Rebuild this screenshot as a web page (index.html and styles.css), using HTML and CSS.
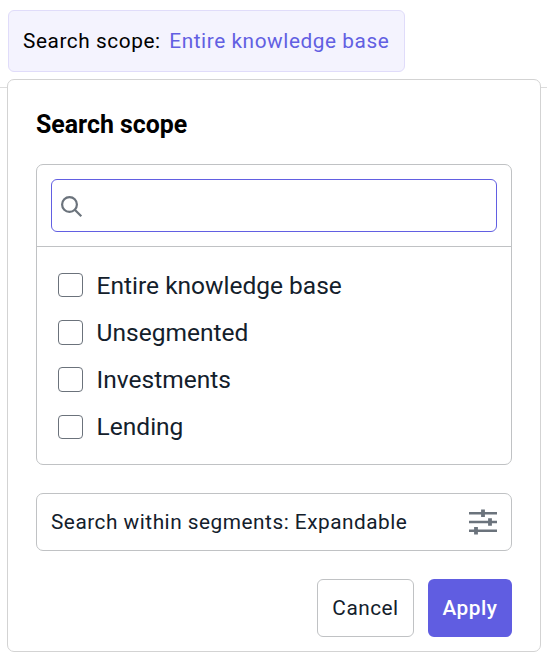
FILE: index.html
```html
<!DOCTYPE html>
<html lang="en">

<head>
    <meta charset="utf-8">
    <title>Search scope</title>
    <link rel="stylesheet" href="styles.css">
</head>

<body>
    <div class="toolbar">
        <button class="scope-button" type="button">
            <span>Search scope:</span>
            <span class="scope-value">Entire knowledge base</span>
        </button>
    </div>

    <div class="panel">
        <h2>Search scope</h2>

        <div class="segments">
            <div class="search">
                <label class="search-box">
                    <svg class="search-icon" viewBox="0 0 22 22">
                        <circle cx="8.5" cy="8.5" r="7.4" />
                        <path d="M13.8 13.8L20.3 20.3" />
                    </svg>
                    <input type="text" aria-label="Search">
                </label>
            </div>

            <div class="options">
                <label class="option"><input type="checkbox"><span>Entire knowledge base</span></label>
                <label class="option"><input type="checkbox"><span>Unsegmented</span></label>
                <label class="option"><input type="checkbox"><span>Investments</span></label>
                <label class="option"><input type="checkbox"><span>Lending</span></label>
            </div>
        </div>

        <div class="expand">
            <span>Search within segments: Expandable</span>
            <svg class="sliders-icon" viewBox="0 0 28 26">
                <path class="line" d="M0 4.2H28M0 13H28M0 21.8H28" />
                <path class="knob" d="M14 .4V8M21 9.2V16.8M7 18V25.6" />
            </svg>
        </div>

        <div class="actions">
            <button class="cancel" type="button">Cancel</button>
            <button class="apply" type="button">Apply</button>
        </div>
    </div>
</body>

</html>
```

FILE: styles.css
```css
* {
    box-sizing: border-box;
}

body {
    margin: 0;
    background-color: #ffffff;
    color: #13202b;
    font-family: Roboto, "Liberation Sans", sans-serif;
    overflow: hidden;
}

button {
    font-family: inherit;
    font-size: 20.8px;
    letter-spacing: 0.5px;
    border-radius: 6px;
    cursor: pointer;
}

/* Bar behind the dropdown */
.toolbar {
    height: 88px;
    padding: 10px 8px 0;
    border-bottom: 1px solid #dcdcdc;
}

.scope-button {
    display: flex;
    align-items: center;
    gap: 8.6px;
    width: 397px;
    height: 62px;
    padding: 0 14px;
    border: 1px solid #e0dcfa;
    background-color: #f4f3fe;
    color: #000000;
    letter-spacing: 0.57px;
    white-space: nowrap;
}

.scope-value {
    color: #625fe2;
}

/* Dropdown */
.panel {
    position: relative;
    width: 534px;
    height: 573px;
    margin: -9px 0 0 7px;
    padding: 31px 28px 28px;
    background-color: #ffffff;
    border: 1px solid #d3d3d3;
    border-radius: 7px;
}

h2 {
    margin: 0 0 25px;
    color: #000000;
    font-size: 24.9px;
    font-weight: 700;
    line-height: 28px;
}

.segments {
    height: 301px;
    border: 1px solid #c0c2c4;
    border-radius: 7px;
}

.search {
    padding: 14px;
    border-bottom: 1px solid #c0c2c4;
}

.search-box {
    display: flex;
    align-items: center;
    height: 53px;
    padding: 2px 9px 0;
    border: 1px solid #625fe2;
    border-radius: 6px;
}

.search-box input {
    flex: 1;
    margin-left: 10px;
    border: none;
    outline: none;
    font-size: 21px;
}

.search-icon {
    width: 22px;
    height: 22px;
    fill: none;
    stroke: #6b737c;
    stroke-width: 2.2;
}

.options {
    padding: 15px 21px;
}

.option {
    display: flex;
    align-items: center;
    height: 47px;
    font-size: 24.5px;
}

.option input {
    appearance: none;
    width: 25px;
    height: 25px;
    margin: 0 13.6px 0 0;
    border: 1px solid #6b727b;
    border-radius: 4px;
    background-color: #ffffff;
}

.option:first-child input {
    height: 24px;
    margin-bottom: 1px;
}

.option:last-child input {
    height: 24px;
    margin-top: 1px;
}

.expand {
    display: flex;
    align-items: center;
    justify-content: space-between;
    height: 58px;
    margin-top: 28px;
    padding: 0 14px;
    border: 1px solid #c0c2c4;
    border-radius: 7px;
    font-size: 20.8px;
    letter-spacing: 0.51px;
}

.sliders-icon {
    width: 28px;
    height: 26px;
    fill: none;
    stroke: #6b737c;
}

.sliders-icon .line {
    stroke-width: 2.4;
}

.sliders-icon .knob {
    stroke-width: 3.8;
}

/* Buttons */
.actions {
    display: flex;
    justify-content: flex-end;
    gap: 14px;
    margin-top: 28px;
}

.actions button {
    height: 58px;
    padding: 0;
}

.cancel {
    width: 97px;
    border: 1px solid #c0c2c4;
    background-color: #ffffff;
    color: #13202b;
}

.apply {
    width: 84px;
    border: none;
    background-color: #605de1;
    color: #ffffff;
    font-weight: 500;
}
```
